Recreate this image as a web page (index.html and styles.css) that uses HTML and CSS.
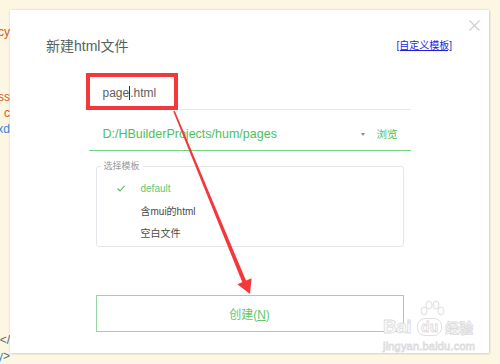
FILE: index.html
```html
<!DOCTYPE html>
<html lang="zh-CN">
<head>
    <meta charset="UTF-8">
    <meta name="viewport" content="width=device-width, initial-scale=1.0">
    <title>新建html文件</title>
    <link rel="stylesheet" href="styles.css">
</head>
<body>
<div class="stage">

    <!-- editor behind the dialog, only the cut ends of lines are visible -->
    <div class="editor">
        <div class="ln orange">fancy</div>
        <div class="ln"></div>
        <div class="ln"></div>
        <div class="ln"></div>
        <div class="ln orange">class</div>
        <div class="ln orange">c</div>
        <div class="ln blue">xd</div>
        <div class="ln"></div><div class="ln"></div><div class="ln"></div>
        <div class="ln"></div><div class="ln"></div><div class="ln"></div>
        <div class="ln"></div><div class="ln"></div><div class="ln"></div>
        <div class="ln"></div><div class="ln"></div><div class="ln"></div>
        <div class="ln grey">&lt;/</div>
        <div class="ln"><span class="blue">y</span><span class="grey">&gt;</span></div>
    </div>

    <div class="dialog">
        <div class="head">
            <h1 class="title">新建html文件</h1>
            <a class="tpl-link" href="#">[自定义模板]</a>
        </div>

        <div class="form">
            <div class="field">page<span class="caret-bar"></span>.html</div>

            <div class="path">
                <span class="path-text">D:/HBuilderProjects/hum/pages</span>
                <span class="drop"></span>
                <span class="browse">浏览</span>
            </div>

            <fieldset class="tpl">
                <legend>选择模板</legend>
                <div class="opts">
                    <div class="opt active">
                        <span class="check">
                            <svg width="8" height="7" viewBox="0 0 8 7"><polyline points="0.5,3.5 3,6 7.5,0.8" fill="none" stroke="#4fbf62" stroke-width="1.1"/></svg>
                        </span>
                        default
                    </div>
                    <div class="opt"><span class="check"></span>含mui的html</div>
                    <div class="opt"><span class="check"></span>空白文件</div>
                </div>
            </fieldset>

            <button class="create">创建(<u>N</u>)</button>
        </div>

        <svg class="close" width="11" height="11" viewBox="0 0 11 11">
            <path d="M0.5 0.5 L10.5 10.5 M10.5 0.5 L0.5 10.5" stroke="#cfcfcf" stroke-width="1.2"/>
        </svg>
    </div>

    <!-- annotations drawn over the screenshot -->
    <div class="red-box"></div>
    <svg class="arrow" width="500" height="364" viewBox="0 0 500 364">
        <polygon points="174.7,110.6 173.3,111.4 242.4,282.5 246.2,280.9" fill="#f2383a"/>
        <polygon points="250,294 237.4,284.2 251.6,278.2" fill="#f2383a"/>
    </svg>

    <div class="mark">
        <svg class="paw" width="26" height="18" viewBox="0 0 26 18">
            <g fill="#fcfcfc" stroke="#e0e0e0" stroke-width="1">
                <ellipse cx="5" cy="11" rx="3" ry="4"/>
                <ellipse cx="10" cy="5" rx="3" ry="4"/>
                <ellipse cx="17" cy="5" rx="3" ry="4"/>
                <ellipse cx="22" cy="11" rx="3" ry="4"/>
            </g>
        </svg>
        <div class="mark-top"><span class="bai">Bai</span><span class="du">du</span><span class="jy">经验</span></div>
        <div class="mark-url">jingyan.baidu.com</div>
    </div>
</div>
</body>
</html>
```

FILE: styles.css
```css
* {
    box-sizing: border-box;
}

body {
    margin: 0;
    background: #fdf6e3;
    font-family: "Liberation Sans", "Noto Sans CJK SC", sans-serif;
}

.stage {
    position: relative;
    width: 500px;
    height: 364px;
    overflow: hidden;
}

/* editor */
.editor {
    padding-top: 24px;
    font-size: 12px;
}

.ln {
    display: flex;
    justify-content: flex-end;
    width: 10px;
    height: 16.2px;
    line-height: 16.2px;
    overflow: hidden;
    white-space: nowrap;
}

.orange { color: #d4602a; }
.blue { color: #3f87cf; }
.grey { color: #5b6c70; }

/* dialog */
.dialog {
    position: absolute;
    left: 10px;
    top: 10px;
    width: 479px;
    height: 343px;
    background: #fff;
    box-shadow: 0 0 2px rgba(0, 0, 0, 0.16), 1px 1px 2px rgba(0, 0, 0, 0.1);
}

.head {
    display: flex;
    justify-content: space-between;
    align-items: flex-start;
    height: 66px;
    padding: 26px 37px 0 36px;
}

.title {
    margin: 0;
    font-size: 14px;
    font-weight: normal;
    line-height: 20px;
    color: #56615a;
}

.tpl-link {
    font-size: 10px;
    line-height: 20px;
    color: #1c1ce6;
    text-decoration: underline;
}

.close {
    position: absolute;
    left: 459px;
    top: 10px;
}

.form {
    width: 322px;
    margin: 0 auto;
}

.field {
    padding: 7px 14px 6px;
    line-height: 20px;
    font-size: 12px;
    color: #606060;
    border-bottom: 1px solid #e6e9ec;
}

.caret-bar {
    display: inline-block;
    width: 0;
    height: 14px;
    border-left: 1px solid #333;
    vertical-align: -3px;
}

.path {
    display: flex;
    align-items: center;
    padding: 14px 13px 6px 14px;
    line-height: 20px;
    border-bottom: 1px solid #74d383;
    color: #4cc05e;
}

.path-text {
    flex: 1;
    font-size: 12.5px;
}

.drop {
    width: 0;
    height: 0;
    margin-right: 12px;
    border-left: 2.5px solid transparent;
    border-right: 2.5px solid transparent;
    border-top: 3px solid #8a8a8a;
}

.browse {
    font-size: 10.5px;
}

.tpl {
    margin: 9px 7px 0;
    padding: 0 0 3px;
    border: 1px solid #e3e7eb;
    border-radius: 3px;
    min-width: 0;
}

.tpl legend {
    margin-left: 4px;
    padding: 0 3px;
    font-size: 9px;
    line-height: 12px;
    color: #999;
}

.opts {
    padding-top: 5px;
}

.opt {
    display: flex;
    align-items: center;
    height: 22px;
    padding-left: 20px;
    font-size: 10px;
    color: #4a4a4a;
}

.opt.active {
    color: #62c772;
}

.check {
    display: flex;
    align-items: center;
    width: 24px;
}

.create {
    display: block;
    width: calc(100% - 14px);
    height: 37px;
    margin: 48px 7px 0;
    background: #fff;
    border: 1px solid #93d89e;
    color: #62c772;
    font-family: "Liberation Sans", "Noto Sans CJK SC", sans-serif;
    font-size: 12px;
    cursor: pointer;
}

/* annotations */
.red-box {
    position: absolute;
    left: 86px;
    top: 73px;
    width: 92px;
    height: 37px;
    border: 4px solid #f2383a;
}

.arrow {
    position: absolute;
    left: 0;
    top: 0;
    pointer-events: none;
}

.mark {
    position: absolute;
    left: 383px;
    top: 300px;
    width: 92px;
    color: #fcfcfc;
    -webkit-text-stroke: 0.8px #dcdcdc;
    font-weight: bold;
}

.paw {
    display: block;
    margin-left: 36px;
}

.mark-top {
    display: flex;
    align-items: center;
    height: 18px;
}

.bai {
    font-size: 19px;
    letter-spacing: -0.5px;
}

.du {
    margin: 0 3px 0 6px;
    padding: 0 3px;
    font-size: 14px;
    border: 1px solid #e0e0e0;
    border-radius: 8px;
}

.jy {
    font-size: 14px;
}

.mark-url {
    margin-top: 4px;
    font-size: 11px;
    font-weight: normal;
    letter-spacing: 0.2px;
}
```
